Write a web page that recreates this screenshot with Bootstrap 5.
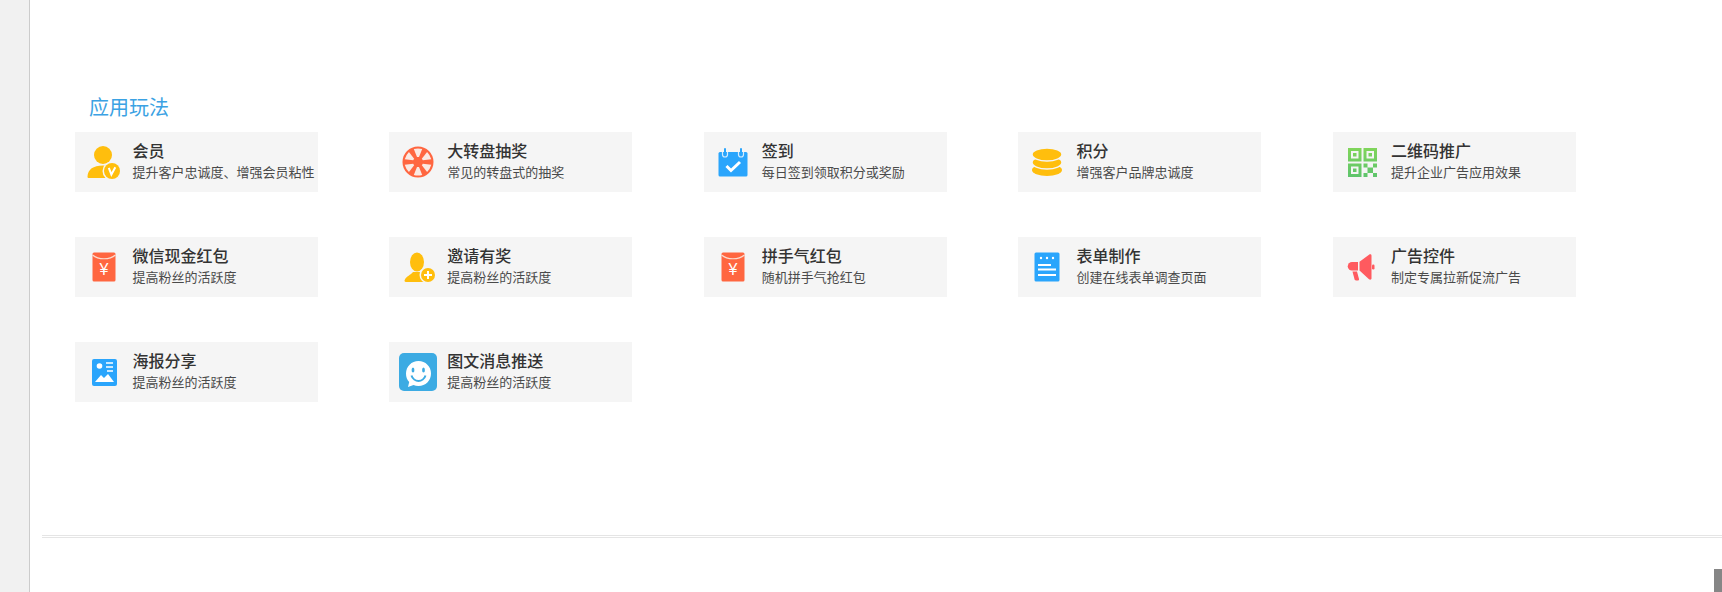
<!DOCTYPE html>
<html lang="zh-CN">
<head>
  <meta charset="UTF-8">
  <meta name="viewport" content="width=device-width, initial-scale=1">
  <title>应用玩法</title>
  <link href="https://cdn.jsdelivr.net/npm/bootstrap@5.3.2/dist/css/bootstrap.min.css" rel="stylesheet">
  <style>
    html, body {
      height: 592px;
      overflow: hidden;
    }

    body {
      font-family: "Liberation Sans", "Noto Sans CJK SC", sans-serif;
      background: #fff;
    }

    .side-strip {
      width: 30px;
      height: 592px;
      background: #f1f1f1;
      border-right: 1px solid #ccc;
    }

    .app-section {
      padding: 94px 0 0 44.6px;
    }

    .app-heading {
      font-size: 20px;
      font-weight: 400;
      line-height: 28px;
      color: #3ba2e3;
      margin: 0 0 10px 14.4px;
    }

    .app-grid {
      display: grid;
      grid-template-columns: repeat(5, 314.6px);
      row-gap: 45px;
    }

    .app-item {
      width: 243px;
      height: 60px;
      background: #f5f5f5;
    }

    .app-icon {
      width: 58px;
    }

    .app-title {
      font-size: 16px;
      font-weight: 500;
      line-height: 22px;
      color: #333;
    }

    .app-desc {
      font-size: 13px;
      line-height: 20px;
      color: #4a4a4a;
      white-space: nowrap;
    }

    .double-rule {
      height: 3px;
      margin: 133px 0 0 12px;
      border-top: 1px solid #e5e5e5;
      border-bottom: 1px solid #e5e5e5;
    }

    .scroll-thumb {
      position: absolute;
      right: 0;
      bottom: 0;
      width: 8px;
      height: 23px;
      background: #868686;
    }
  </style>
</head>
<body>

  <div class="d-flex position-relative">
    <div class="side-strip flex-shrink-0"></div>
    <div class="flex-grow-1">
      <div class="app-section">
        <h5 class="app-heading">应用玩法</h5>
        <div class="app-grid">

          <div class="app-item d-flex align-items-center">
            <div class="app-icon d-flex justify-content-center">
              <svg width="40" height="40" viewBox="0 0 40 40"><circle cx="19" cy="13" r="9" fill="#ffbe0d"/><path d="M5 36c-1 0-1.600-.6-1.500-1.600C4 27.500 9 23.500 19 23.500s15 4 15.500 12.500z" fill="#ffbe0d"/><circle cx="28" cy="29" r="9.500" fill="#f5f5f5"/><circle cx="28" cy="29" r="8" fill="#ffbe0d"/><path d="M24.800 25.800l2.600 6.700 3.900-7.200" fill="none" stroke="#fff" stroke-width="2"/></svg>
            </div>
            <div><div class="app-title">会员</div><div class="app-desc">提升客户忠诚度、增强会员粘性</div></div>
          </div>

          <div class="app-item d-flex align-items-center">
            <div class="app-icon d-flex justify-content-center">
              <svg width="40" height="40" viewBox="0 0 40 40"><circle cx="20" cy="20" r="15.500" fill="#ff6640"/><g fill="#fbe9e3"><path d="M19 15L15.800 7.100Q20 6 24.200 7.100L21 15z"/><path d="M19 15L15.800 7.100Q20 6 24.200 7.100L21 15z" transform="rotate(60 20 20)"/><path d="M19 15L15.800 7.100Q20 6 24.200 7.100L21 15z" transform="rotate(120 20 20)"/><path d="M19 15L15.800 7.100Q20 6 24.200 7.100L21 15z" transform="rotate(180 20 20)"/><path d="M19 15L15.800 7.100Q20 6 24.200 7.100L21 15z" transform="rotate(240 20 20)"/><path d="M19 15L15.800 7.100Q20 6 24.200 7.100L21 15z" transform="rotate(300 20 20)"/></g></svg>
            </div>
            <div><div class="app-title">大转盘抽奖</div><div class="app-desc">常见的转盘式的抽奖</div></div>
          </div>

          <div class="app-item d-flex align-items-center">
            <div class="app-icon d-flex justify-content-center">
              <svg width="40" height="40" viewBox="0 0 40 40"><rect x="5.500" y="10" width="29" height="24.500" rx="1.500" fill="#2aa5fc"/><path d="M9.500 10v2.500a2.500 2.500 0 0 0 5 0V10M25.500 10v2.500a2.500 2.500 0 0 0 5 0V10" fill="none" stroke="#d5ecfe" stroke-width="1.200"/><rect x="11" y="6" width="2" height="8" rx="1" fill="#2aa5fc"/><rect x="27" y="6" width="2" height="8" rx="1" fill="#2aa5fc"/><path d="M13.500 24l4.500 4.500L27 20" fill="none" stroke="#fff" stroke-width="3"/></svg>
            </div>
            <div><div class="app-title">签到</div><div class="app-desc">每日签到领取积分或奖励</div></div>
          </div>

          <div class="app-item d-flex align-items-center">
            <div class="app-icon d-flex justify-content-center">
              <svg width="40" height="40" viewBox="0 0 40 40"><ellipse cx="20" cy="28" rx="15" ry="6" fill="#ffbe0d"/><ellipse cx="20" cy="20.500" rx="15" ry="6.500" fill="#ffbe0d" stroke="#f5f5f5" stroke-width="1.500"/><ellipse cx="20" cy="12.500" rx="15" ry="6.500" fill="#ffbe0d" stroke="#f5f5f5" stroke-width="1.500"/></svg>
            </div>
            <div><div class="app-title">积分</div><div class="app-desc">增强客户品牌忠诚度</div></div>
          </div>

          <div class="app-item d-flex align-items-center">
            <div class="app-icon d-flex justify-content-center">
              <svg width="40" height="40" viewBox="0 0 40 40"><defs><linearGradient id="qrGreen" x1="0" y1="0" x2="0" y2="1"><stop offset="0" stop-color="#80d55a"/><stop offset="1" stop-color="#5ec46c"/></linearGradient></defs><path fill="url(#qrGreen)" fill-rule="evenodd" d="M6 6h13.500v13.500H6zM9 9v7.500h7.500V9zM11 11h3.500v3.500H11zM21.500 6H35v13.500H21.500zM24.500 9v7.500H32V9zM26.500 11H30v3.500h-3.500zM6 21.500h13.500V35H6zM9 24.500V32h7.500v-7.500zM11 26.500h3.500V30H11zM21.500 21.500h4v4h-4zM31 21.500h4v4h-4zM25.500 25.500H31V31h-5.500zM21.500 31h4v4h-4zM31 31h4v4h-4z"/></svg>
            </div>
            <div><div class="app-title">二维码推广</div><div class="app-desc">提升企业广告应用效果</div></div>
          </div>

          <div class="app-item d-flex align-items-center">
            <div class="app-icon d-flex justify-content-center">
              <svg width="40" height="40" viewBox="0 0 40 40"><rect x="8.500" y="5.500" width="23" height="29" rx="1.500" fill="#ff6640"/><path d="M8.500 8c6 5 17 5 23 0" fill="none" stroke="#fbdcd0" stroke-width="1.200"/><text x="20" y="28" text-anchor="middle" font-size="16" font-family="Liberation Sans" fill="#fff">¥</text></svg>
            </div>
            <div><div class="app-title">微信现金红包</div><div class="app-desc">提高粉丝的活跃度</div></div>
          </div>

          <div class="app-item d-flex align-items-center">
            <div class="app-icon d-flex justify-content-center">
              <svg width="40" height="40" viewBox="0 0 40 40"><ellipse cx="19" cy="15" rx="7" ry="9.500" fill="#ffbe0d"/><path d="M8 35c-1.500 0-1.800-1-1.200-2.200 1.500-3.500 6-5 8.200-7.800h8c2 2.500 5 3.800 8 5l-3 5z" fill="#ffbe0d"/><circle cx="30" cy="28" r="8.500" fill="#f5f5f5"/><circle cx="30" cy="28" r="7" fill="#ffbe0d"/><path d="M30 24v8M26 28h8" stroke="#fff" stroke-width="2"/></svg>
            </div>
            <div><div class="app-title">邀请有奖</div><div class="app-desc">提高粉丝的活跃度</div></div>
          </div>

          <div class="app-item d-flex align-items-center">
            <div class="app-icon d-flex justify-content-center">
              <svg width="40" height="40" viewBox="0 0 40 40"><rect x="8.500" y="5.500" width="23" height="29" rx="1.500" fill="#ff6640"/><path d="M8.500 8c6 5 17 5 23 0" fill="none" stroke="#fbdcd0" stroke-width="1.200"/><text x="20" y="28" text-anchor="middle" font-size="16" font-family="Liberation Sans" fill="#fff">¥</text></svg>
            </div>
            <div><div class="app-title">拼手气红包</div><div class="app-desc">随机拼手气抢红包</div></div>
          </div>

          <div class="app-item d-flex align-items-center">
            <div class="app-icon d-flex justify-content-center">
              <svg width="40" height="40" viewBox="0 0 40 40"><rect x="7.500" y="5.500" width="25" height="29" rx="1.500" fill="#2aa5fc"/><path d="M11 18h13M11 22.500h18M11 28h18" stroke="#fff" stroke-width="1.800"/><circle cx="14" cy="11" r="1.200" fill="#fff"/><circle cx="20" cy="11" r="1.200" fill="#fff"/><circle cx="26" cy="11" r="1.200" fill="#fff"/></svg>
            </div>
            <div><div class="app-title">表单制作</div><div class="app-desc">创建在线表单调查页面</div></div>
          </div>

          <div class="app-item d-flex align-items-center">
            <div class="app-icon d-flex justify-content-center">
              <svg width="40" height="40" viewBox="0 0 40 40"><path d="M10 15h6v8.500h-6a4.250 4.250 0 0 1 0-8.500z" fill="#ff5a5f"/><path d="M17.500 14.800L27 7.800c1-.8 2.500-.6 2.500 1v22.400c0 1.600-1.500 1.800-2.500 1l-9.500-8.700z" fill="#ff5a5f"/><rect x="30" y="17.500" width="2.500" height="5" rx="1.200" fill="#ff5a5f"/><path d="M10.500 24.500H15l2 7.500c.2 1-.6 1.500-1.500 1.500H14c-.8 0-1.300-.5-1.500-1.200z" fill="#ff5a5f"/></svg>
            </div>
            <div><div class="app-title">广告控件</div><div class="app-desc">制定专属拉新促流广告</div></div>
          </div>

          <div class="app-item d-flex align-items-center">
            <div class="app-icon d-flex justify-content-center">
              <svg width="40" height="40" viewBox="0 0 40 40"><rect x="8" y="7" width="25" height="27" rx="2" fill="#2aa5fc"/><circle cx="15.500" cy="14" r="2.800" fill="#fff"/><path d="M22 11h7M22 15h7M23 19h6" stroke="#fff" stroke-width="1.400"/><path d="M11 30l6-7 3 3 4-4 6 8z" fill="#fff"/></svg>
            </div>
            <div><div class="app-title">海报分享</div><div class="app-desc">提高粉丝的活跃度</div></div>
          </div>

          <div class="app-item d-flex align-items-center">
            <div class="app-icon d-flex justify-content-center">
              <svg width="40" height="40" viewBox="0 0 40 40"><rect x="1" y="1" width="38" height="38" rx="5" fill="#3cabe3"/><path d="M20.500 9C27.500 9 33 14.500 33 21.500S27.500 34 20.500 34c-1.800 0-3.400-.3-5-1l-5.500 2 1.200-5C9 27.800 8 24.800 8 21.500 8 14.500 13.500 9 20.500 9z" fill="#fff"/><ellipse cx="15" cy="18" rx="1.400" ry="2.500" fill="#3cabe3"/><ellipse cx="25.500" cy="18" rx="1.400" ry="2.500" fill="#3cabe3"/><path d="M13.500 23.500c1 3.500 4.200 5.500 7 5.500s6-2 7-5.500" fill="none" stroke="#3cabe3" stroke-width="2"/></svg>
            </div>
            <div><div class="app-title">图文消息推送</div><div class="app-desc">提高粉丝的活跃度</div></div>
          </div>

        </div>
      </div>
      <div class="double-rule"></div>
    </div>
    <div class="scroll-thumb"></div>
  </div>

  <script src="https://cdn.jsdelivr.net/npm/bootstrap@5.3.2/dist/js/bootstrap.bundle.min.js"></script>
</body>
</html>
